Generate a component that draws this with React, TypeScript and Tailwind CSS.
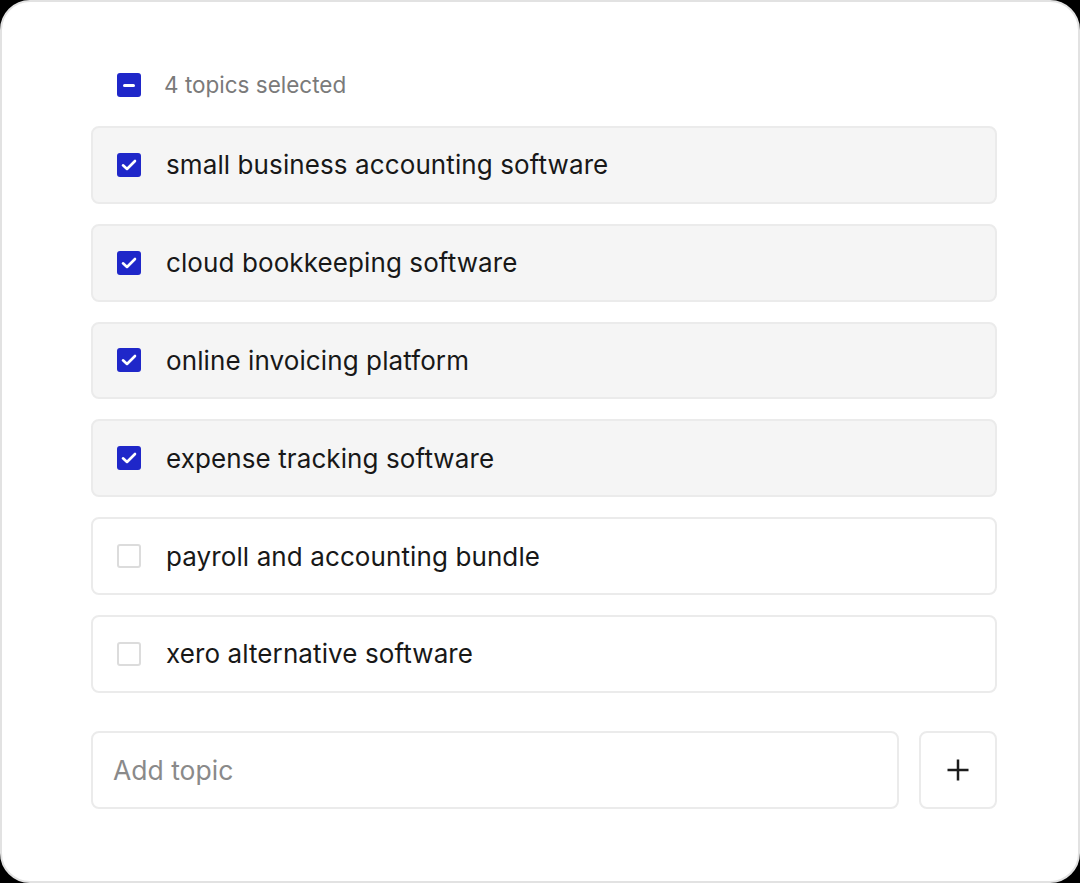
import { useState } from "react";

const initialTopics = [
  { label: "small business accounting software", checked: true },
  { label: "cloud bookkeeping software", checked: true },
  { label: "online invoicing platform", checked: true },
  { label: "expense tracking software", checked: true },
  { label: "payroll and accounting bundle", checked: false },
  { label: "xero alternative software", checked: false },
];

const Box = ({ state }: { state: "on" | "off" | "mixed" }) => {
  if (state === "off") {
    return <div className="w-6 h-6 shrink-0 rounded-[3px] border-2 border-[#dcdcdc] bg-white" />;
  }
  return (
    <div className="w-6 h-6 shrink-0 rounded-[3px] bg-[#1f27c9] flex items-center justify-center">
      {state === "on" ? (
        <svg width="16" height="16" viewBox="0 0 16 16" fill="none">
          <path d="M2 8.3 L6 12 L14 4" stroke="white" strokeWidth="2.6" strokeLinecap="round" strokeLinejoin="round" />
        </svg>
      ) : (
        <div className="w-[12px] h-[3px] rounded-full bg-white" />
      )}
    </div>
  );
};

export default function App() {
  const [topics, setTopics] = useState(initialTopics);
  const count = topics.filter((t) => t.checked).length;

  return (
    <div className="bg-black w-[1080px] h-[883px]" style={{ fontFamily: "Inter, 'Noto Sans', sans-serif" }}>
      <div className="w-full h-full bg-white border-2 border-[#e2e2e2] rounded-[30px] pl-[89px] pt-[71px]">
        <div className="w-[906px] flex flex-col">
          <div className="flex items-center gap-[23px] pl-[26px] h-6">
            <Box state={count === topics.length ? "on" : count === 0 ? "off" : "mixed"} />
            <span className="text-[22.5px] text-[#7a7a7a]">{count} topics selected</span>
          </div>

          <div className="mt-[29px] flex flex-col gap-[20px]">
            {topics.map((t, i) => (
              <div
                key={t.label}
                onClick={() => setTopics(topics.map((x, j) => (j === i ? { ...x, checked: !x.checked } : x)))}
                className={`h-[77.8px] flex items-center gap-[25px] pl-[24px] rounded-[8px] border-2 border-[#ebebeb] cursor-pointer ${
                  t.checked ? "bg-[#f5f5f5]" : "bg-white"
                }`}
              >
                <Box state={t.checked ? "on" : "off"} />
                <span className="text-[26px] text-[#181818] tracking-[0.1px]">{t.label}</span>
              </div>
            ))}
          </div>

          <div className="mt-[38px] flex gap-[20px]">
            <div className="flex-1 h-[78px] rounded-[8px] border-2 border-[#ebebeb] flex items-center pl-[20px] pt-[2px]">
              <input
                placeholder="Add topic"
                className="w-full bg-transparent outline-none text-[26.5px] text-[#1c1c1c] placeholder:text-[#8a8a8a]"
              />
            </div>
            <button className="w-[78px] h-[78px] rounded-[8px] border-2 border-[#ebebeb] flex items-center justify-center">
              <svg width="24" height="24" viewBox="0 0 24 24" fill="none">
                <path d="M12 1.5 V22.5 M1.5 12 H22.5" stroke="#1c1c1c" strokeWidth="2.5" />
              </svg>
            </button>
          </div>
        </div>
      </div>
    </div>
  );
}
